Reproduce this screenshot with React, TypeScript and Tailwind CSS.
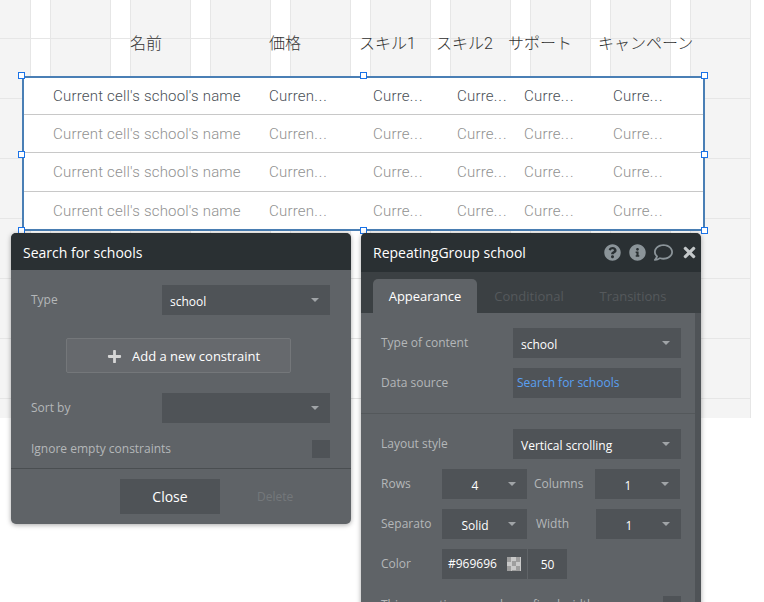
import React from "react";
import { FaQuestionCircle, FaInfoCircle, FaRegComment, FaTimes, FaPlus } from "react-icons/fa";

const Caret = () => (
  <svg width="8" height="4" viewBox="0 0 8 4" className="shrink-0">
    <path d="M0 0H8L4 4Z" fill="#a0a4a7" />
  </svg>
);

const Select = ({ value, className = "", center = false }: { value: string; className?: string; center?: boolean }) => (
  <div className={`h-[30px] bg-[#4f5357] flex items-center pr-[11px] text-[12px] font-medium text-white ${className}`}>
    <span className={center ? "flex-1 text-center pt-[3px]" : "flex-1 pl-2 pt-[3px]"}>{value}</span>
    <Caret />
  </div>
);

const Handle = ({ className }: { className: string }) => (
  <div className={`absolute w-[7px] h-[7px] bg-white border border-[#1a73e8] ${className}`} />
);

const rowCells = ["Current cell's school's name", "Curren", "Curre", "Curre", "Curre", "Curre"];

const Row = ({ active, last, height }: { active?: boolean; last?: boolean; height: string }) => (
  <div
    className={`grid grid-cols-[216px_104px_84px_67px_89px_1fr] items-center pl-[29px] text-[15px] font-light tracking-[0.2px] ${height} ${
      active ? "text-[#4a4f56]" : "text-[#919191]"
    } ${last ? "" : "border-b border-[#c8c8c8]"}`}
  >
    {rowCells.map((c, i) => (
      <span key={i} className="whitespace-nowrap">
        {c}
        {i > 0 && <span className="tracking-[1px]">...</span>}
      </span>
    ))}
  </div>
);

export default function App() {
  return (
    <div
      className="relative w-[764px] h-[602px] overflow-hidden bg-white"
      style={{ fontFamily: '"Open Sans", sans-serif' }}
    >
      {/* canvas grid */}
      <div className="absolute left-0 top-0 w-[751px] h-[418px] bg-[#f4f4f4] border-r border-[#e6e6e6] bg-[linear-gradient(to_bottom,transparent_38px,#e6e6e6_38px,#e6e6e6_39px,transparent_39px),linear-gradient(to_right,transparent_0,transparent_30px,#e6e6e6_30px,#e6e6e6_31px,#ffffff_31px,#ffffff_50px,#e6e6e6_50px,#e6e6e6_51px,transparent_51px)] bg-[length:100%_60px,80px_100%]" />
      {/* canvas header labels */}
      <div
        className="absolute left-0 top-[33px] w-[751px] flex text-[16px] font-light leading-[22px] text-[#333333] whitespace-nowrap"
        style={{ fontFamily: 'Roboto, "Noto Sans CJK JP", sans-serif' }}
      >
        <span className="ml-[130px] w-[139px]">名前</span>
        <span className="w-[90px]">価格</span>
        <span className="w-[77px]">スキル1</span>
        <span className="w-[72px]">スキル2</span>
        <span className="w-[90px]">サポート</span>
        <span>キャンペーン</span>
      </div>

      {/* repeating group */}
      <div
        className="absolute left-[22px] top-[76px] w-[683px] h-[155px] bg-white border-2 border-[#4a7fb5] flex flex-col"
        style={{ fontFamily: "Roboto, sans-serif" }}
      >
        <Row active height="h-[37px]" />
        <Row height="h-[38px] pt-px" />
        <Row height="h-[39px]" />
        <Row last height="flex-1 pt-px" />
      </div>
      <Handle className="left-[18px] top-[72px]" />
      <Handle className="left-[360px] top-[72px]" />
      <Handle className="left-[701px] top-[72px]" />
      <Handle className="left-[18px] top-[151px]" />
      <Handle className="left-[701px] top-[151px]" />
      <Handle className="left-[18px] top-[227px]" />
      <Handle className="left-[360px] top-[227px]" />
      <Handle className="left-[701px] top-[227px]" />

      {/* search palette */}
      <div className="absolute left-[11px] top-[233px] w-[340px] h-[291px] rounded-[5px] bg-[#5f6367] shadow-[0_1px_5px_rgba(0,0,0,0.35)] overflow-hidden flex flex-col">
        <div className="h-[37px] bg-[#2a3033] flex items-center pl-3 pt-px text-[14px] font-medium text-white">
          Search for schools
        </div>
        <div className="flex-1 flex flex-col pl-5 pr-[21px] pt-[15px]">
          <div className="flex items-center justify-between h-[30px] text-[12px] text-[#b4b7b9]">
            <span>Type</span>
            <Select value="school" className="w-[168px]" />
          </div>
          <button className="mt-[23px] ml-[35px] w-[225px] h-[35px] bg-[#66696d] border border-[#74777a] rounded-[2px] flex items-center pl-[40px] pt-[2px] gap-[10px] text-[13px] font-medium text-white">
            <FaPlus className="text-[#d6d6d6] text-[15px]" />
            <span>Add a new constraint</span>
          </button>
          <div className="mt-[20px] flex items-center justify-between h-[30px] text-[12px] text-[#b4b7b9]">
            <span>Sort by</span>
            <Select value="" className="w-[168px]" />
          </div>
          <div className="mt-[17px] flex items-center justify-between h-[18px] text-[12px] text-[#b4b7b9]">
            <span>Ignore empty constraints</span>
            <div className="w-[18px] h-[18px] bg-[#4f5357]" />
          </div>
        </div>
        <div className="h-[56px] border-t border-[#4a4e51] flex items-start pt-[10px] pl-[109px]">
          <button className="w-[100px] h-[35px] bg-[#4f5357] text-[14px] font-medium text-white">Close</button>
          <span className="ml-[37px] h-[35px] leading-[35px] text-[12px] font-medium text-[#74787b]">Delete</span>
        </div>
      </div>

      {/* property editor */}
      <div className="absolute left-[361px] top-[233px] w-[340px] h-[400px] rounded-t-[5px] bg-[#5f6367] shadow-[0_1px_5px_rgba(0,0,0,0.35)] overflow-hidden flex flex-col">
        <div className="h-[39px] shrink-0 bg-[#2a3033] flex items-center pl-3 pr-[3px] text-[14px] font-medium text-white">
          <span className="flex-1">RepeatingGroup school</span>
          <div className="flex items-center gap-[8px] text-[#8b9499]">
            <FaQuestionCircle className="text-[17px]" />
            <FaInfoCircle className="text-[17px]" />
            <FaRegComment className="text-[19px]" />
            <FaTimes className="text-[17px] text-[#c4c8ca]" />
          </div>
        </div>
        <div className="h-[41px] shrink-0 bg-[#3b4043] flex items-end pl-3 text-[13px] font-medium">
          <div className="w-[104px] h-[34px] pt-px bg-[#5f6367] rounded-t-[5px] flex items-center justify-center text-white">Appearance</div>
          <span className="w-[104px] h-[34px] pt-px flex items-center justify-center text-[#55595c]">Conditional</span>
          <span className="w-[104px] h-[34px] pt-px flex items-center justify-center text-[#55595c]">Transitions</span>
        </div>
        <div className="flex-1 flex min-h-0">
          <div className="flex-1 text-[12px] text-[#b4b7b9]">
            <div className="pl-5 pr-[14px] pt-[15px] pb-[15px] border-b border-[#54585b] flex flex-col gap-[10px]">
              <div className="flex items-center justify-between">
                <span>Type of content</span>
                <Select value="school" className="w-[168px]" />
              </div>
              <div className="flex items-center justify-between">
                <span>Data source</span>
                <div className="w-[168px] h-[30px] bg-[#4f5357] flex items-center pl-1 font-normal text-[#5aa0f2]">Search for schools</div>
              </div>
            </div>
            <div className="pl-5 pr-[14px] pt-[15px] flex flex-col gap-[10px]">
              <div className="flex items-center justify-between">
                <span>Layout style</span>
                <Select value="Vertical scrolling" className="w-[168px]" />
              </div>
              <div className="flex items-center">
                <span className="w-[61px]">Rows</span>
                <Select value="4" center className="w-[85px]" />
                <span className="w-[68px] pl-[7px]">Columns</span>
                <Select value="1" center className="w-[85px]" />
              </div>
              <div className="flex items-center">
                <span className="w-[61px]">Separato</span>
                <Select value="Solid" center className="w-[85px]" />
                <span className="w-[69px] pl-[9px]">Width</span>
                <Select value="1" center className="w-[85px]" />
              </div>
              <div className="flex items-center">
                <span className="w-[61px]">Color</span>
                <div className="w-[85px] h-[30px] bg-[#4f5357] flex items-center pl-[6px] gap-[10px] text-[12px] font-medium text-white">
                  <span>#969696</span>
                  <div className="w-[14px] h-[14px] bg-[conic-gradient(#c9c9c9_25%,#9e9e9e_0_50%,#c9c9c9_0_75%,#9e9e9e_0)] bg-[length:9px_9px]" />
                </div>
                <div className="ml-px w-[39px] h-[30px] pt-[2px] bg-[#4f5357] flex items-center justify-center font-medium text-white">50</div>
              </div>
              <div className="flex items-start justify-between mt-[7px]">
                <span>This repeating group has a fixed width</span>
                <div className="w-[18px] h-[18px] bg-[#4f5357]" />
              </div>
            </div>
          </div>
          <div className="w-[7px] shrink-0 bg-[#4f5357]" />
        </div>
      </div>
    </div>
  );
}
